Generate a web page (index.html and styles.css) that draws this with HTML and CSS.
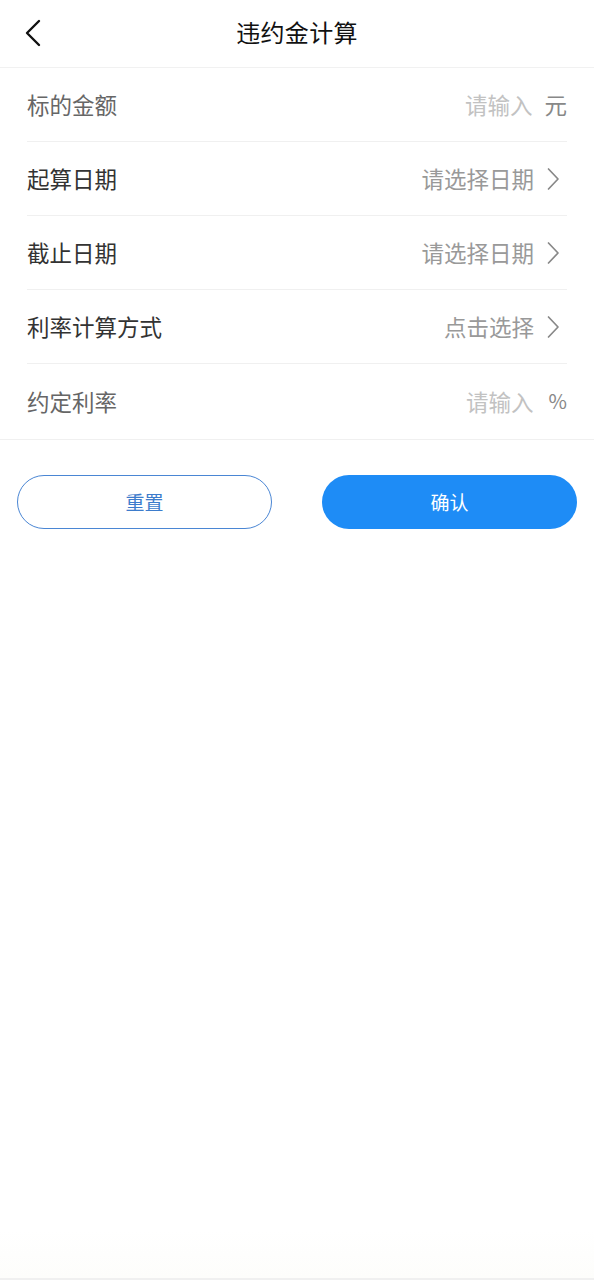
FILE: index.html
```html
<!DOCTYPE html>
<html lang="zh-CN">
<head>
<meta charset="utf-8">
<title>违约金计算</title>
<link rel="stylesheet" href="styles.css">
</head>
<body>
<div class="page">
  <header class="header">
    <span class="back">
      <svg width="18" height="28" viewBox="0 0 18 28"><path d="M15 2 L3 14 L15 26" fill="none" stroke="#111" stroke-width="2.4" stroke-linecap="round" stroke-linejoin="round"/></svg>
    </span>
    <h1 class="title">违约金计算</h1>
  </header>
  <section class="form">
    <div class="row">
      <span class="label muted">标的金额</span>
      <span class="value"><span class="ph light">请输入</span><span class="unit">元</span></span>
    </div>
    <div class="row">
      <span class="label">起算日期</span>
      <span class="value"><span class="ph">请选择日期</span><svg class="chev" width="14" height="24" viewBox="0 0 14 24"><path d="M2.5 2 L12 12 L2.5 22" fill="none" stroke="#888" stroke-width="1.7" stroke-linecap="round" stroke-linejoin="round"/></svg></span>
    </div>
    <div class="row">
      <span class="label">截止日期</span>
      <span class="value"><span class="ph">请选择日期</span><svg class="chev" width="14" height="24" viewBox="0 0 14 24"><path d="M2.5 2 L12 12 L2.5 22" fill="none" stroke="#888" stroke-width="1.7" stroke-linecap="round" stroke-linejoin="round"/></svg></span>
    </div>
    <div class="row">
      <span class="label">利率计算方式</span>
      <span class="value"><span class="ph">点击选择</span><svg class="chev" width="14" height="24" viewBox="0 0 14 24"><path d="M2.5 2 L12 12 L2.5 22" fill="none" stroke="#888" stroke-width="1.7" stroke-linecap="round" stroke-linejoin="round"/></svg></span>
    </div>
    <div class="row last">
      <span class="label muted">约定利率</span>
      <span class="value"><span class="ph light">请输入</span><span class="unit pct">%</span></span>
    </div>
  </section>
  <div class="actions">
    <button class="btn reset">重置</button>
    <button class="btn confirm">确认</button>
  </div>
</div>
</body>
</html>
```

FILE: styles.css
```css
* { box-sizing: border-box; }
html, body { margin: 0; padding: 0; background: #fff; }
body {
  font-family: "Noto Sans CJK SC", "Noto Sans", sans-serif;
  width: 594px;
  height: 1280px;
  overflow: hidden;
}
.page {
  height: 1280px;
  border-bottom: 2px solid #f0f0f0;
  background: linear-gradient(#fff 1230px, #fdfdfb);
}
.header {
  height: 68px;
  padding-bottom: 4px;
  border-bottom: 1px solid #f1f1f1;
  display: flex;
  align-items: center;
  justify-content: center;
  position: relative;
}
.back {
  position: absolute;
  left: 24px;
  top: 19px;
  display: flex;
}
.title {
  margin: 0;
  font-size: 24px;
  font-weight: 400;
  color: #111;
  letter-spacing: 0.3px;
}
.form {
  border-bottom: 1px solid #f0f0f0;
}
.row {
  height: 74px;
  margin: 0 27px;
  padding-bottom: 2px;
  border-bottom: 1px solid #f0f0f0;
  display: flex;
  align-items: center;
  justify-content: space-between;
}
.row.last { border-bottom: none; height: 75px; }
.label {
  font-size: 22.5px;
  color: #333;
}
.label.muted { color: #666; }
.value {
  display: flex;
  align-items: center;
  gap: 12px;
  font-size: 22.5px;
}
.ph { color: #999; }
.ph.light { color: #c2c2c2; }
.unit { color: #888; }
.unit.pct { font-size: 20px; margin-left: 3px; }
.chev { margin-right: 7px; margin-top: 2px; }
.actions {
  display: flex;
  justify-content: space-between;
  padding: 35px 17px 0;
}
.btn {
  width: 255px;
  height: 54px;
  border-radius: 27px;
  font-family: inherit;
  font-size: 19px;
  padding-bottom: 3px;
  cursor: pointer;
}
.reset {
  background: #fff;
  border: 1px solid #4a86d4;
  color: #3d7ccc;
}
.confirm {
  background: #1e8cf6;
  border: none;
  color: #fff;
}
```
